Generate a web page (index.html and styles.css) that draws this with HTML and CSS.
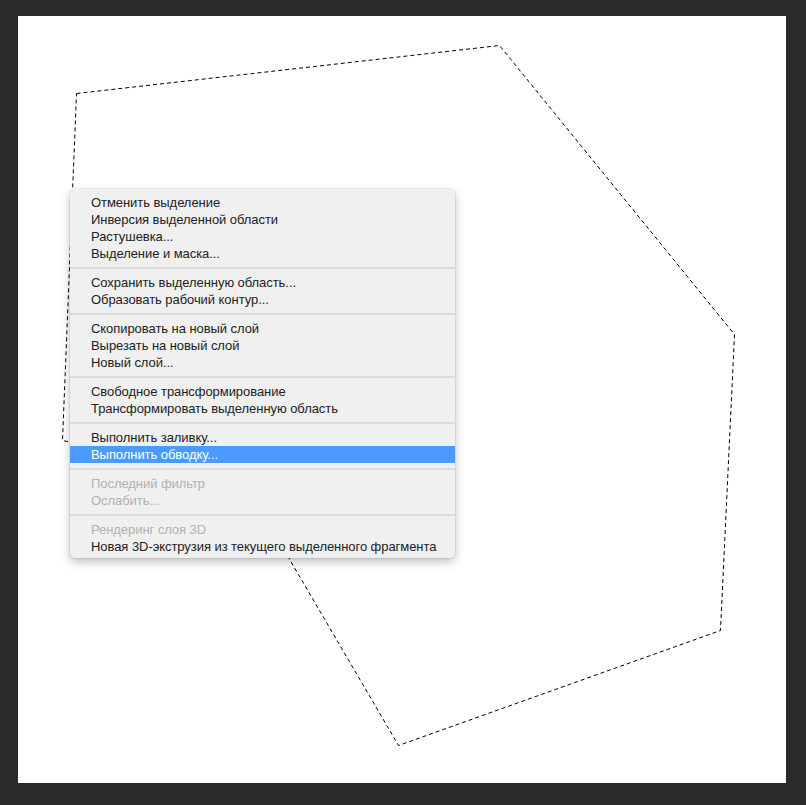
FILE: index.html
```html
<!DOCTYPE html>
<html lang="ru">
<head>
  <meta charset="UTF-8" />
  <meta name="viewport" content="width=device-width, initial-scale=1.0" />
  <title>Выделение - контекстное меню</title>
  <link rel="stylesheet" href="styles.css">
</head>
<body>
  <div class="canvas">
    <svg class="selection" width="768" height="767" viewBox="0 0 768 767">
      <polygon points="58.5,77.5 481.5,29.5 716.5,318.5 702.5,614.5 380.5,729.5 222.5,459.5 44.5,424.5" />
    </svg>

    <div class="menu">
      <div class="item">Отменить выделение</div>
      <div class="item">Инверсия выделенной области</div>
      <div class="item">Растушевка...</div>
      <div class="item">Выделение и маска...</div>
      <div class="sep"></div>
      <div class="item">Сохранить выделенную область...</div>
      <div class="item">Образовать рабочий контур...</div>
      <div class="sep"></div>
      <div class="item">Скопировать на новый слой</div>
      <div class="item">Вырезать на новый слой</div>
      <div class="item">Новый слой...</div>
      <div class="sep"></div>
      <div class="item">Свободное трансформирование</div>
      <div class="item">Трансформировать выделенную область</div>
      <div class="sep"></div>
      <div class="item">Выполнить заливку...</div>
      <div class="item active">Выполнить обводку...</div>
      <div class="sep"></div>
      <div class="item disabled">Последний фильтр</div>
      <div class="item disabled">Ослабить...</div>
      <div class="sep"></div>
      <div class="item disabled">Рендеринг слоя 3D</div>
      <div class="item">Новая 3D-экструзия из текущего выделенного фрагмента</div>
    </div>
  </div>
</body>
</html>
```

FILE: styles.css
```css
body {
  margin: 0;
  background-color: #2b2b2b;
  padding: 16px 20px 22px 18px;
  font-family: "Liberation Sans", Arial, sans-serif;
}

.canvas {
  position: relative;
  width: 768px;
  height: 767px;
  background: #fff;
}

.selection {
  position: absolute;
  top: 0; left: 0;
}

.selection polygon {
  fill: none;
  stroke: #000;
  stroke-width: 1;
  stroke-dasharray: 4 3;
}

.menu {
  position: absolute;
  left: 52px;
  top: 173px;
  width: 385px;
  padding: 5px 0 3px;
  background: #f0f0f0;
  border-radius: 5px;
  box-shadow: 0 0 0 1px rgba(0,0,0,0.06), 0 4px 10px rgba(0,0,0,0.25);
}

.item {
  height: 17px;
  line-height: 17px;
  padding-left: 21px;
  font-size: 13px;
  letter-spacing: -0.06px;
  color: #222;
  white-space: nowrap;
}

.item.active {
  background: #4a9bff;
  color: #fff;
}

.item.disabled {
  color: #b2b2b2;
}

.sep {
  height: 2px;
  margin: 5px 0;
  background: #dcdcdc;
}
```
